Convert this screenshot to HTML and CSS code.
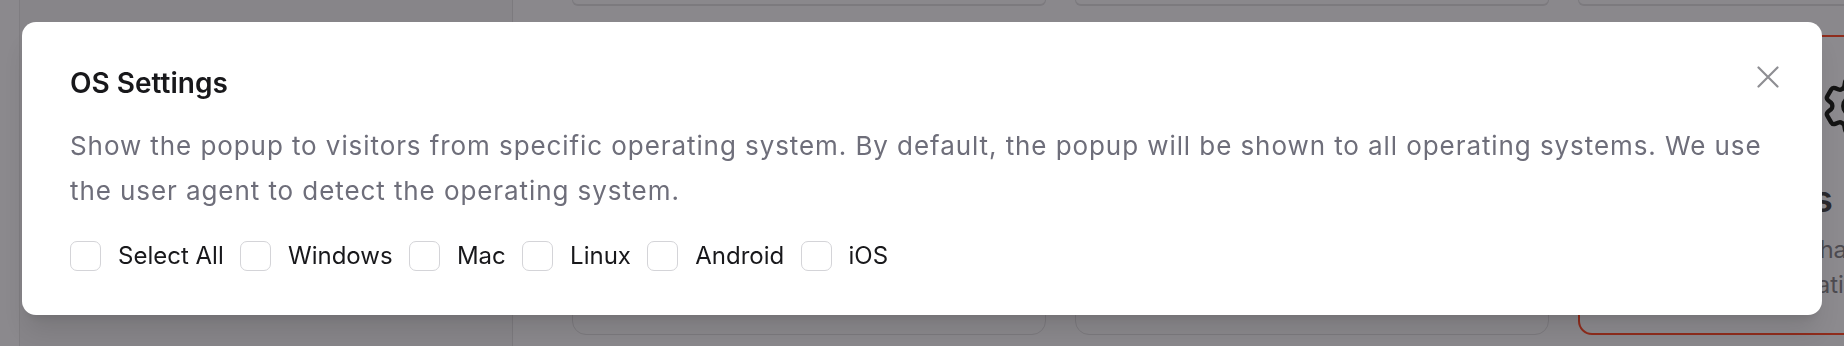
FILE: index.html
```html
<!DOCTYPE html>
<html lang="en">
<head>
<meta charset="utf-8">
<title>OS Settings</title>
<link rel="stylesheet" href="styles.css">
</head>
<body>
<div class="app">
  <aside class="rail"></aside>
  <aside class="sidebar"></aside>
  <main class="main">
    <div class="grid">
      <div class="card card-top"></div>
      <div class="card card-top"></div>
      <div class="card card-top"></div>
      <div class="card"></div>
      <div class="card"></div>
      <div class="card card-active">
        <svg class="gear" viewBox="0 0 24 24" fill="none" stroke="currentColor" stroke-width="1.5" stroke-linecap="round" stroke-linejoin="round" aria-hidden="true">
          <path d="M9.594 3.94c.09-.542.56-.94 1.11-.94h2.593c.55 0 1.02.398 1.11.94l.213 1.281c.063.374.313.686.645.87.074.04.147.083.22.127.325.196.72.257 1.075.124l1.217-.456a1.125 1.125 0 0 1 1.37.49l1.296 2.247a1.125 1.125 0 0 1-.26 1.431l-1.003.827c-.293.241-.438.613-.43.992a7.723 7.723 0 0 1 0 .255c-.008.378.137.75.43.991l1.004.827c.424.35.534.955.26 1.43l-1.298 2.247a1.125 1.125 0 0 1-1.369.491l-1.217-.456c-.355-.133-.75-.072-1.076.124a6.47 6.47 0 0 1-.22.128c-.331.183-.581.495-.644.869l-.213 1.281c-.09.543-.56.94-1.11.94h-2.594c-.55 0-1.019-.398-1.11-.94l-.213-1.281c-.062-.374-.312-.686-.644-.87a6.52 6.52 0 0 1-.22-.127c-.325-.196-.72-.257-1.076-.124l-1.217.456a1.125 1.125 0 0 1-1.369-.49l-1.297-2.247a1.125 1.125 0 0 1 .26-1.431l1.004-.827c.292-.24.437-.613.43-.991a6.932 6.932 0 0 1 0-.255c.007-.38-.138-.751-.43-.992l-1.004-.827a1.125 1.125 0 0 1-.26-1.43l1.297-2.247a1.125 1.125 0 0 1 1.37-.491l1.216.456c.356.133.751.072 1.076-.124.072-.044.146-.086.22-.128.332-.183.582-.495.644-.869l.214-1.28Z"/>
          <path d="M15 12a3 3 0 1 1-6 0 3 3 0 0 1 6 0Z"/>
        </svg>
        <h3 class="card-title">OS Settings</h3>
        <p class="card-text"><span class="line line-1">Choose devices that use</span><span class="line line-2">any specific operating system</span></p>
      </div>
    </div>
  </main>
</div>

<div class="overlay">
  <div class="modal" role="dialog" aria-labelledby="os-title">
    <button class="close" type="button" aria-label="Close">
      <svg viewBox="0 0 22 22" fill="none" stroke="currentColor" stroke-width="2.2" stroke-linecap="round" aria-hidden="true">
        <path d="M1.5 1.5 20.5 20.5M20.5 1.5 1.5 20.5"/>
      </svg>
    </button>
    <h2 class="modal-title" id="os-title">OS Settings</h2>
    <p class="modal-desc">Show the popup to visitors from specific operating system. By default, the popup will be shown to all operating systems. We use the user agent to detect the operating system.</p>
    <div class="options">
      <label class="option"><span class="box"></span><span class="label">Select All</span></label>
      <label class="option"><span class="box"></span><span class="label">Windows</span></label>
      <label class="option"><span class="box"></span><span class="label">Mac</span></label>
      <label class="option"><span class="box"></span><span class="label">Linux</span></label>
      <label class="option"><span class="box"></span><span class="label">Android</span></label>
      <label class="option"><span class="box"></span><span class="label">iOS</span></label>
    </div>
  </div>
</div>
</body>
</html>
```

FILE: styles.css
```css
* { box-sizing: border-box; }

html, body {
  margin: 0;
  padding: 0;
  width: 1844px;
  height: 346px;
  overflow: hidden;
  background: #8a888c;
  font-family: Inter, "Noto Sans", "Liberation Sans", sans-serif;
}

/* ---------- dimmed page underneath ---------- */
.app {
  display: flex;
  height: 346px;
}

.rail {
  flex: 0 0 20px;
  background: #8b898d;
  border-right: 1.5px solid #7f7d81;
}

.sidebar {
  flex: 0 0 493px;
  background: #878589;
  border-right: 1.5px solid #7c7a7e;
}

.main {
  flex: 1 1 auto;
  padding-left: 59px;
  overflow: hidden;
}

.grid {
  display: grid;
  grid-template-columns: 474px 474px 474px;
  grid-template-rows: 6px 300px;
  column-gap: 29px;
  row-gap: 29px;
}

.card {
  border: 1.5px solid #7c7a7e;
  border-radius: 14px;
  background: #8a888c;
}

.card-top {
  border-top: none;
  border-radius: 0 0 12px 12px;
  border-width: 0 1.5px 2px 1.5px;
}

.card-active {
  border: 2px solid #8f2c1c;
  background: #8c8a8e;
  padding: 38px 0 0 40px;
  overflow: hidden;
}

.gear {
  display: block;
  width: 70px;
  height: 70px;
  margin-left: 197px;
  margin-top: -4px;
  color: #141414;
}

.card-title {
  margin: 36px 0 0 0;
  padding-left: 10px;
  font-size: 36px;
  line-height: 45px;
  font-weight: 600;
  color: #2a292d;
  white-space: nowrap;
}

.card-text {
  margin: 10px 0 0 0;
  font-size: 24px;
  line-height: 35px;
  color: #4d4b50;
  white-space: nowrap;
}

.line { display: block; }
.line-1 { padding-left: 3px; }
.line-2 { padding-left: 1px; }

/* ---------- modal ---------- */
.overlay {
  position: fixed;
  inset: 0;
  padding: 22px;
}

.modal {
  position: relative;
  background: #ffffff;
  border-radius: 14px;
  padding: 40px 48px 44px 48px;
  box-shadow: 0 20px 25px -5px rgba(0, 0, 0, 0.10), 0 8px 10px -6px rgba(0, 0, 0, 0.10);
}

.close {
  position: absolute;
  top: 44px;
  right: 43px;
  width: 22px;
  height: 22px;
  padding: 0;
  border: 0;
  background: transparent;
  color: #8e8e93;
  cursor: pointer;
}

.close svg {
  display: block;
  width: 22px;
  height: 22px;
}

.modal-title {
  margin: 0;
  font-size: 28px;
  line-height: 43px;
  font-weight: 600;
  color: #18181b;
}

.modal-desc {
  margin: 18px 0 0 0;
  font-size: 26px;
  line-height: 45px;
  letter-spacing: 0.92px;
  color: #6e6e7a;
}

.options {
  margin-top: 28px;
  display: flex;
  align-items: center;
  gap: 16.3px;
}

.option {
  display: flex;
  align-items: center;
  gap: 17px;
  cursor: pointer;
}

.box {
  display: block;
  width: 31px;
  height: 30px;
  border: 1.5px solid #d4d4d8;
  border-radius: 7px;
  background: #ffffff;
}

.label {
  font-size: 24px;
  line-height: 30px;
  color: #18181b;
}
```
